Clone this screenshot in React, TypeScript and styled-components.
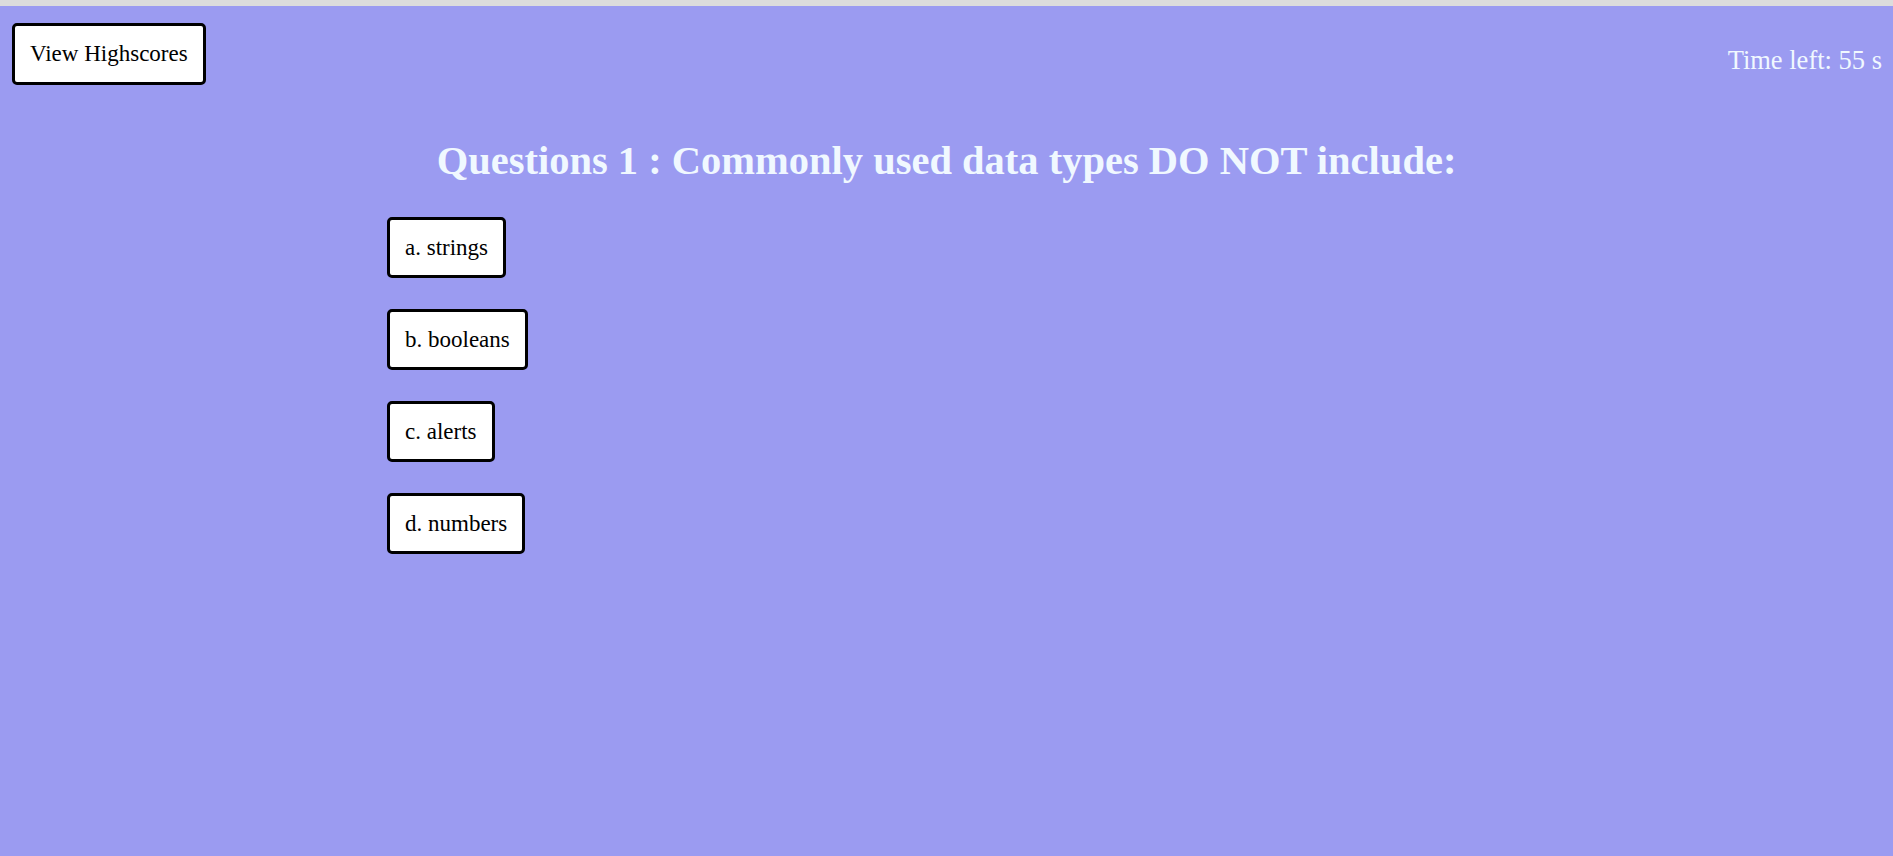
import React from "react";
import styled, { createGlobalStyle } from "styled-components";

const GlobalStyle = createGlobalStyle`
  html, body {
    margin: 0;
    padding: 0;
  }
  body {
    background: #9b9bf1;
    border-top: 6px solid #dcdcdc;
    min-height: 850px;
    font-family: "Liberation Serif", "Times New Roman", serif;
  }
`;

const Page = styled.div`
  display: flex;
  flex-direction: column;
`;

const Header = styled.header`
  display: flex;
  justify-content: space-between;
  align-items: flex-start;
  padding: 17px 11px 0 12px;
`;

const Button = styled.button<{ $tall?: boolean }>`
  background: #ffffff;
  border: 3px solid #000000;
  border-radius: 5px;
  padding: 14px 15px;
  font-family: "Liberation Serif", "Times New Roman", serif;
  font-size: 23px;
  line-height: ${(p) => (p.$tall ? "28px" : "27px")};
  color: #000000;
  cursor: pointer;
  white-space: nowrap;
`;

const Timer = styled.div`
  margin-top: 23px;
  font-size: 26.5px;
  line-height: 28px;
  color: #f0f8ff;
`;

const Question = styled.h1`
  margin: 54px 0 0;
  text-align: center;
  font-size: 40.5px;
  line-height: 44px;
  font-weight: bold;
  color: #f0f8ff;
`;

const Answers = styled.div`
  display: flex;
  flex-direction: column;
  align-items: flex-start;
  gap: 31px;
  margin-top: 34px;
  padding-left: 387px;
`;

const answers = ["a. strings", "b. booleans", "c. alerts", "d. numbers"];

export default function App() {
  return (
    <>
      <GlobalStyle />
      <Page>
        <Header>
          <Button $tall>View Highscores</Button>
          <Timer>Time left: 55 s</Timer>
        </Header>
        <Question>Questions 1 : Commonly used data types DO NOT include:</Question>
        <Answers>
          {answers.map((a) => (
            <Button key={a}>{a}</Button>
          ))}
        </Answers>
      </Page>
    </>
  );
}
